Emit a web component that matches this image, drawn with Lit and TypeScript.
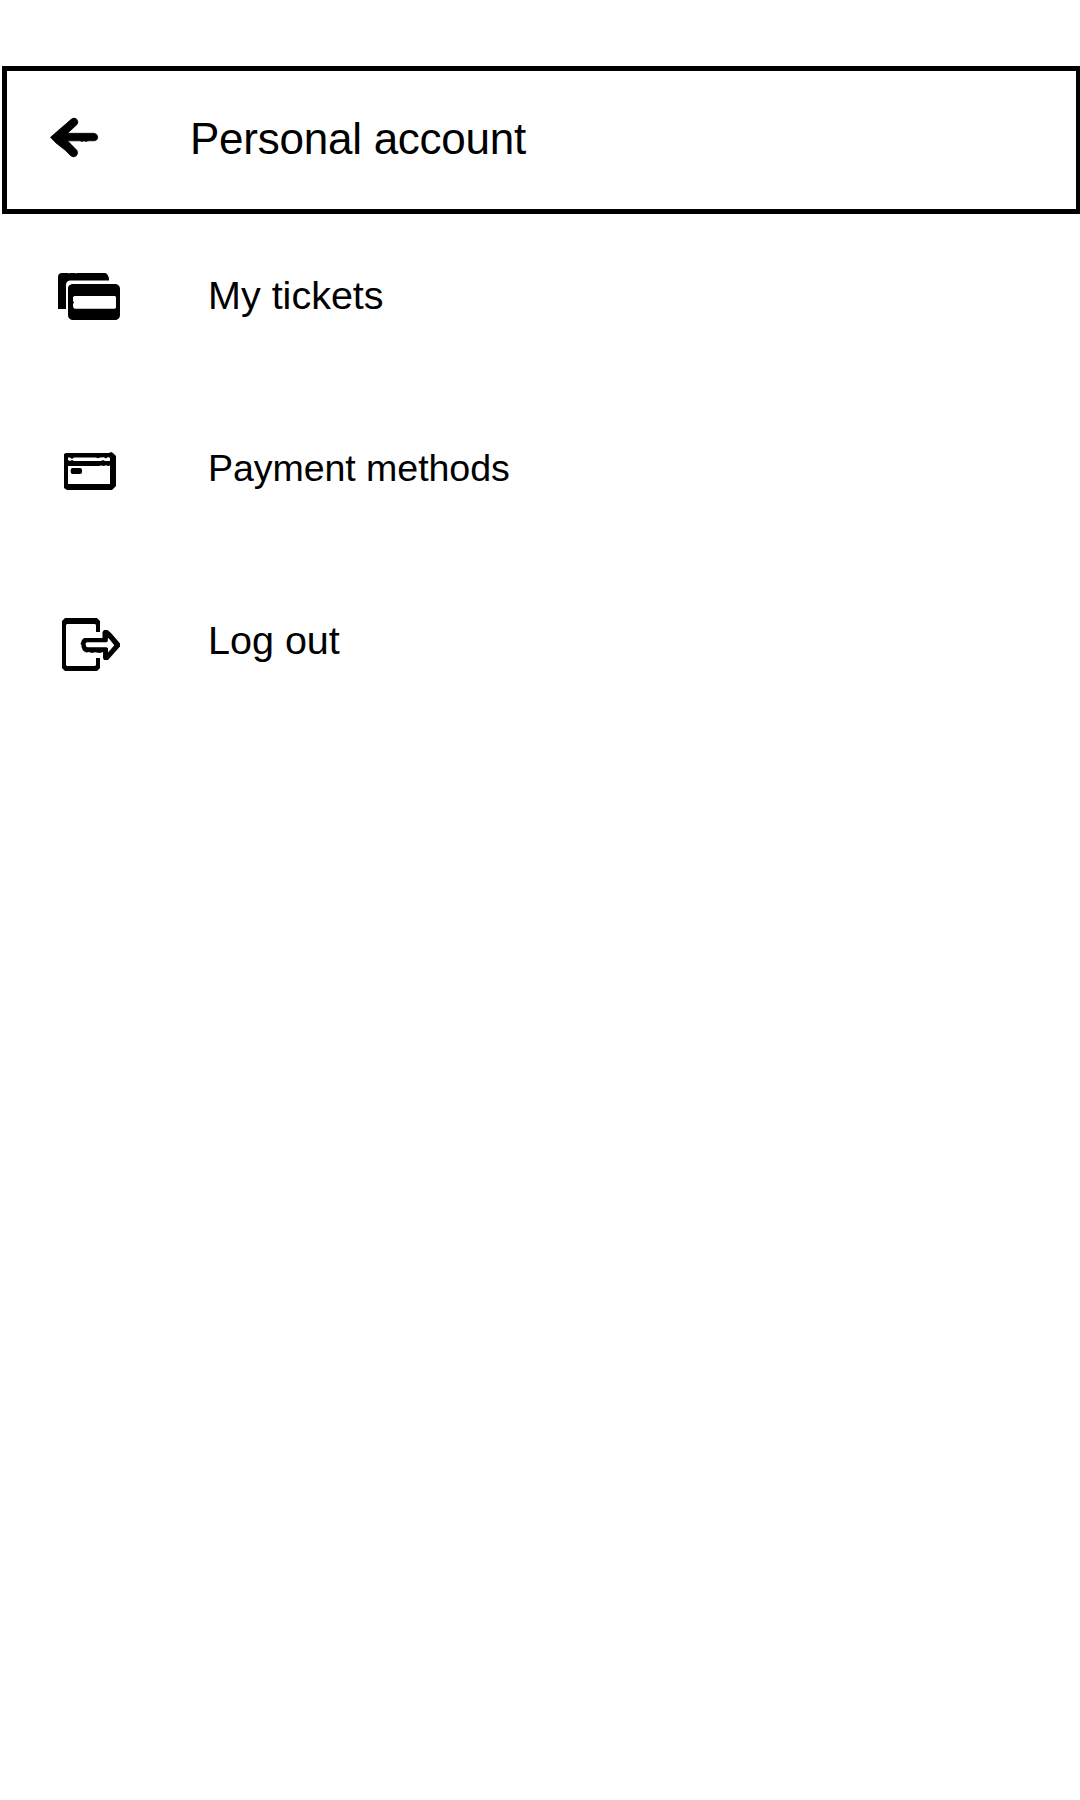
import { LitElement, html, css, svg } from "lit";
import { customElement } from "lit/decorators.js";

const backIcon = svg`
  <path stroke="#000" stroke-width="0.8" stroke-linejoin="round" d="M10.500 32.300 L31 14.500 Q34 12 36.500 14 Q39 17 37 19.500 L27.500 28.300 H54 Q57.700 29 57.700 32.300 Q57.700 35.700 54 35.800 H48 L46 36.500 L44 35.800 L42 36.500 L40 35.800 H27.500 L37 45.500 Q38.500 49 36 51 Q33 53 30.500 50.500 L25 45 L16 38 Z"/>`;

const ticketsIcon = svg`
  <path d="M8 54 V22 Q8 18 12 18 H18 L19 18.500 L20 18 H25 L26 18.500 L27 18 H55 Q59 19 59 25.500 H20 Q16 26 16 30 V54 H9 Z"/>
  <path fill-rule="evenodd" d="M22 29 H66 Q70 30 70 34 V60 Q70 64 66 65 H22 Q18 64 18 60 V33 Q18 30 22 29 Z
    M24.500 41 L23 42 V46 L24 47.500 L23 49 V52 L24.500 53.700 H65 L66 52.500 V42 L65 41 Z"/>`;

const cardIcon = svg`
  <path fill-rule="evenodd" d="M16 25 H59 L61 24 L63 25 L66 28 V58 L63 61 L62 62 H17 L14 60 V26 Z
    M18 29.500 V32 L20 33 L22 32 L24 33 H51 L53 32 L55 33 H60 V30 L58 29 L56 30.500 L54 29.300 L50 29.500 L48 30.300 L46 29.500 H24 L22 31 L20 29.500 Z
    M18 38 V56 H60 V37.500 L58 38 L56 37.300 L54 38 L51 37.500 L49 38 Z"/>
  <rect x="20.700" y="40" width="11.300" height="6" rx="2"/>`;

const logoutIcon = svg`
  <path d="M15 17 H47 L50 20 V31 H46 V24 L45 23 H17 L16 24 V64 L17 65 H45 L46 64 V57 H50 V67 L47 70 H15 L12 67 V20 Z"/>
  <path fill-rule="evenodd" d="M34 37 H52.500 V31 L54 29 H57.500 L61 32 L70 42.500 V45.500 L58 59 L54 59 L53 57 V51 L50 52 L45 51.300 L42 52 L39 51 L36 51.500 L33 49.500 L31.500 46 V44 L30.500 43 L32 39 Z
    M36.500 41.300 L35.500 43 L36.200 45.500 L37.500 46.300 H56.500 L58 47.300 V51.500 L64.300 44.300 L58.500 37 L57.800 37.500 V40.300 L56.500 41.300 Z"/>`;

const items = [
  { id: "tickets", label: "My tickets", icon: ticketsIcon },
  { id: "payment", label: "Payment methods", icon: cardIcon },
  { id: "logout", label: "Log out", icon: logoutIcon },
];

@customElement("app-root")
export class AppRoot extends LitElement {
  static styles = css`
    :host {
      display: block;
      box-sizing: border-box;
      min-height: 1800px;
      padding-top: 66px;
      background: #fff;
      color: #000;
      font-family: "Liberation Sans", Arial, sans-serif;
    }
    .header {
      display: flex;
      align-items: center;
      box-sizing: border-box;
      height: 148px;
      margin-left: 2px;
      padding-left: 33px;
      border: 5px solid #000;
      border-right-width: 4px;
    }
    .back {
      flex: none;
      width: 70px;
      height: 70px;
    }
    .title {
      margin: 0 0 2px 80px;
      font-size: 44px;
      font-weight: 400;
      line-height: 60px;
      letter-spacing: -0.25px;
      white-space: nowrap;
    }
    .menu {
      display: flex;
      flex-direction: column;
      gap: 93px;
      margin: 0;
      padding: 41px 0 0 50px;
      list-style: none;
    }
    .item {
      display: flex;
      align-items: center;
      gap: 78px;
      height: 80px;
    }
    .icon {
      flex: none;
      width: 80px;
      height: 80px;
    }
    .label {
      line-height: 60px;
      white-space: nowrap;
      font-size: 39.5px;
    }
    .payment {
      font-size: 37.6px;
      letter-spacing: -0.08px;
    }
    .logout {
      margin-bottom: 2px;
    }
  `;

  render() {
    return html`
      <header class="header">
        <svg class="back" viewBox="0 0 70 70">${backIcon}</svg>
        <h1 class="title">Personal account</h1>
      </header>
      <ul class="menu">
        ${items.map(
          (item) => html`<li class="item">
            <svg class="icon" viewBox="0 0 80 80">${item.icon}</svg>
            <span class="label ${item.id}">${item.label}</span>
          </li>`
        )}
      </ul>
    `;
  }
}
